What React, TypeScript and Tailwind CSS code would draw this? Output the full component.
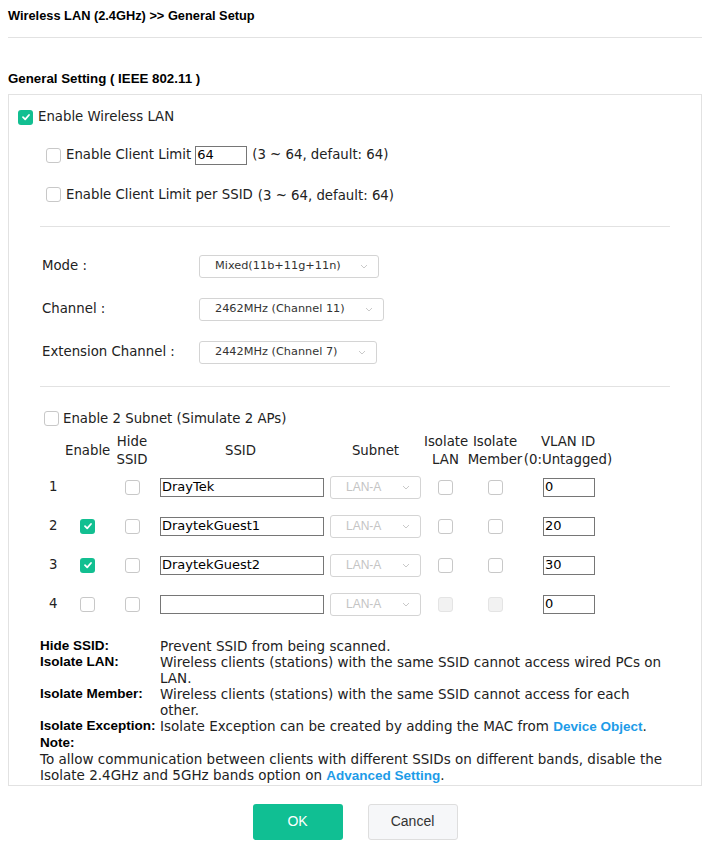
import React from "react";

const body = { fontFamily: '"DejaVu Sans", Verdana, sans-serif' };
const arial = { fontFamily: '"Liberation Sans", Arial, sans-serif' };

function Check({ on = false, disabled = false }: { on?: boolean; disabled?: boolean }) {
  if (on) {
    return (
      <span className="inline-flex h-[15px] w-[15px] shrink-0 items-center justify-center rounded-[3px] bg-[#12bf91]">
        <svg width="10" height="10" viewBox="0 0 10 10">
          <path d="M2 5.2 L4.2 7.3 L8 3" fill="none" stroke="#fff" strokeWidth="1.8" strokeLinecap="round" strokeLinejoin="round" />
        </svg>
      </span>
    );
  }
  return (
    <span
      className={`inline-block h-[15px] w-[15px] shrink-0 rounded-[3px] border ${
        disabled ? "border-[#e4e4e4] bg-[#f2f2f2]" : "border-[#c8c8c8] bg-white"
      }`}
    />
  );
}

function Select({ value, w, disabled = false }: { value: string; w: string; disabled?: boolean }) {
  return (
    <div
      className={`flex h-[23px] items-center justify-between rounded-[3px] border border-[#d4d4d4] bg-white pl-[15px] pr-[10px] ${w} ${
        disabled ? "text-[#c4c4c4]" : "text-[#333]"
      }`}
      style={disabled ? arial : body}
    >
      <span className={disabled ? "text-[12px]" : "text-[11.3px]"}>{value}</span>
      <svg width="8" height="5" viewBox="0 0 8 5">
        <path d="M1 1 L4 4 L7 1" fill="none" stroke="#bbb" strokeWidth="0.8" />
      </svg>
    </div>
  );
}

function TextBox({ value, w }: { value: string; w: string }) {
  return (
    <div className={`flex h-[19px] items-center border border-[#767676] px-[1px] text-[13px] text-black ${w}`} style={body}>
      {value}
    </div>
  );
}

const rows = [
  { n: 1, enable: null as boolean | null, ssid: "DrayTek", vlan: "0", dis: false },
  { n: 2, enable: true, ssid: "DraytekGuest1", vlan: "20", dis: false },
  { n: 3, enable: true, ssid: "DraytekGuest2", vlan: "30", dis: false },
  { n: 4, enable: false, ssid: "", vlan: "0", dis: true },
];

const cols = "grid grid-cols-[25px_45px_44px_173px_97px_43px_56px_90px]";

export default function App() {
  return (
    <div className="w-[710px] bg-white text-[#222]" style={body}>
      <div className="px-2 pt-[6px]">
        <div className="pb-[12px] text-[12.8px] font-bold text-black" style={arial}>
          Wireless LAN (2.4GHz) &gt;&gt; General Setup
        </div>
        <div className="h-px bg-[#e2e2e2]" />
        <div className="mt-[31px] mb-[5px] text-[13.3px] font-bold text-black" style={arial}>
          General Setting ( IEEE 802.11 )
        </div>

        <div className="w-[694px] border border-[#e2e2e2] pb-[1px] text-[13.3px]">
          <div className="flex items-center gap-[5px] pl-[9px] pt-[12px]">
            <Check on />
            <span>Enable Wireless LAN</span>
          </div>

          <div className="mt-[18px] flex items-center pl-[37px]">
            <Check />
            <span className="ml-[5px]">Enable Client Limit</span>
            <div className="ml-[4px]">
              <TextBox value="64" w="w-[52px]" />
            </div>
            <span className="ml-[5px]">(3 ~ 64, default: 64)</span>
          </div>

          <div className="mt-[18px] flex items-center pl-[37px]">
            <Check />
            <span className="ml-[5px]">Enable Client Limit per SSID</span>
            <span className="ml-[5px] mt-[3px]">(3 ~ 64, default: 64)</span>
          </div>

          <div className="mx-[31px] mt-[20px] h-px bg-[#e2e2e2]" />

          <div className="mt-[28px] flex flex-col gap-[20px] pl-[33px]">
            <div className="flex items-center">
              <span className="w-[157px]">Mode :</span>
              <Select value="Mixed(11b+11g+11n)" w="w-[180px]" />
            </div>
            <div className="flex items-center">
              <span className="w-[157px]">Channel :</span>
              <Select value="2462MHz (Channel 11)" w="w-[185px]" />
            </div>
            <div className="flex items-center">
              <span className="w-[157px]">Extension Channel :</span>
              <Select value="2442MHz (Channel 7)" w="w-[178px]" />
            </div>
          </div>

          <div className="mx-[31px] mt-[22px] h-px bg-[#e2e2e2]" />

          <div className="mt-[22px] flex items-center gap-[4px] pl-[35px]">
            <Check />
            <span>Enable 2 Subnet (Simulate 2 APs)</span>
          </div>

          <div className="ml-[31px] mt-[4px] leading-[18px]">
            <div className={`${cols} h-[35px] items-center text-center`}>
              <span />
              <span>Enable</span>
              <span>
                Hide
                <br />
                SSID
              </span>
              <span>SSID</span>
              <span>Subnet</span>
              <span>
                Isolate
                <br />
                LAN
              </span>
              <span>
                Isolate
                <br />
                Member
              </span>
              <span className="whitespace-nowrap">
                VLAN ID
                <br />
                (0:Untagged)
              </span>
            </div>
            {rows.map((r) => (
              <div key={r.n} className={`${cols} h-[39px] items-center`}>
                <span className="pl-[9px]">{r.n}</span>
                <div className="flex justify-center">{r.enable === null ? null : <Check on={r.enable} />}</div>
                <div className="flex justify-center">
                  <Check />
                </div>
                <div className="pl-[6px]">
                  <TextBox value={r.ssid} w="w-[164px]" />
                </div>
                <div className="pl-[3px]">
                  <Select value="LAN-A" w="w-[91px]" disabled />
                </div>
                <div className="flex justify-center">
                  <Check disabled={r.dis} />
                </div>
                <div className="flex justify-center">
                  <Check disabled={r.dis} />
                </div>
                <div className="pl-[20px]">
                  <TextBox value={r.vlan} w="w-[52px]" />
                </div>
              </div>
            ))}
          </div>

          <div className="ml-[31px] mt-[14px] w-[655px] whitespace-nowrap text-[13.5px] leading-[16px]">
            <div className="grid grid-cols-[120px_1fr]">
              <span className="font-bold text-black" style={arial}>Hide SSID:</span>
              <span>Prevent SSID from being scanned.</span>
              <span className="font-bold text-black" style={arial}>Isolate LAN:</span>
              <span>
                Wireless clients (stations) with the same SSID cannot access wired PCs on
                <br />
                LAN.
              </span>
              <span className="font-bold text-black" style={arial}>Isolate Member:</span>
              <span>
                Wireless clients (stations) with the same SSID cannot access for each
                <br />
                other.
              </span>
              <span className="font-bold text-black" style={arial}>Isolate Exception:</span>
              <span>
                Isolate Exception can be created by adding the MAC from{" "}
                <span className="font-bold text-[#1e9ce8]" style={arial}>Device Object</span>.
              </span>
            </div>
            <div className="font-bold text-black" style={arial}>Note:</div>
            <div>
              To allow communication between clients with different SSIDs on different bands, disable the
              <br />
              Isolate 2.4GHz and 5GHz bands option on{" "}
              <span className="font-bold text-[#1e9ce8]" style={arial}>Advanced Setting</span>.
            </div>
          </div>
        </div>

        <div className="mt-[18px] flex justify-center gap-[25px] pb-[6px]">
          <button className="h-[36px] w-[90px] rounded-[3px] bg-[#10bf93] text-[14px] text-white" style={arial}>
            OK
          </button>
          <button className="h-[36px] w-[90px] rounded-[3px] border border-[#dedede] bg-[#f6f7f9] text-[14px] text-[#333]" style={arial}>
            Cancel
          </button>
        </div>
      </div>
    </div>
  );
}
